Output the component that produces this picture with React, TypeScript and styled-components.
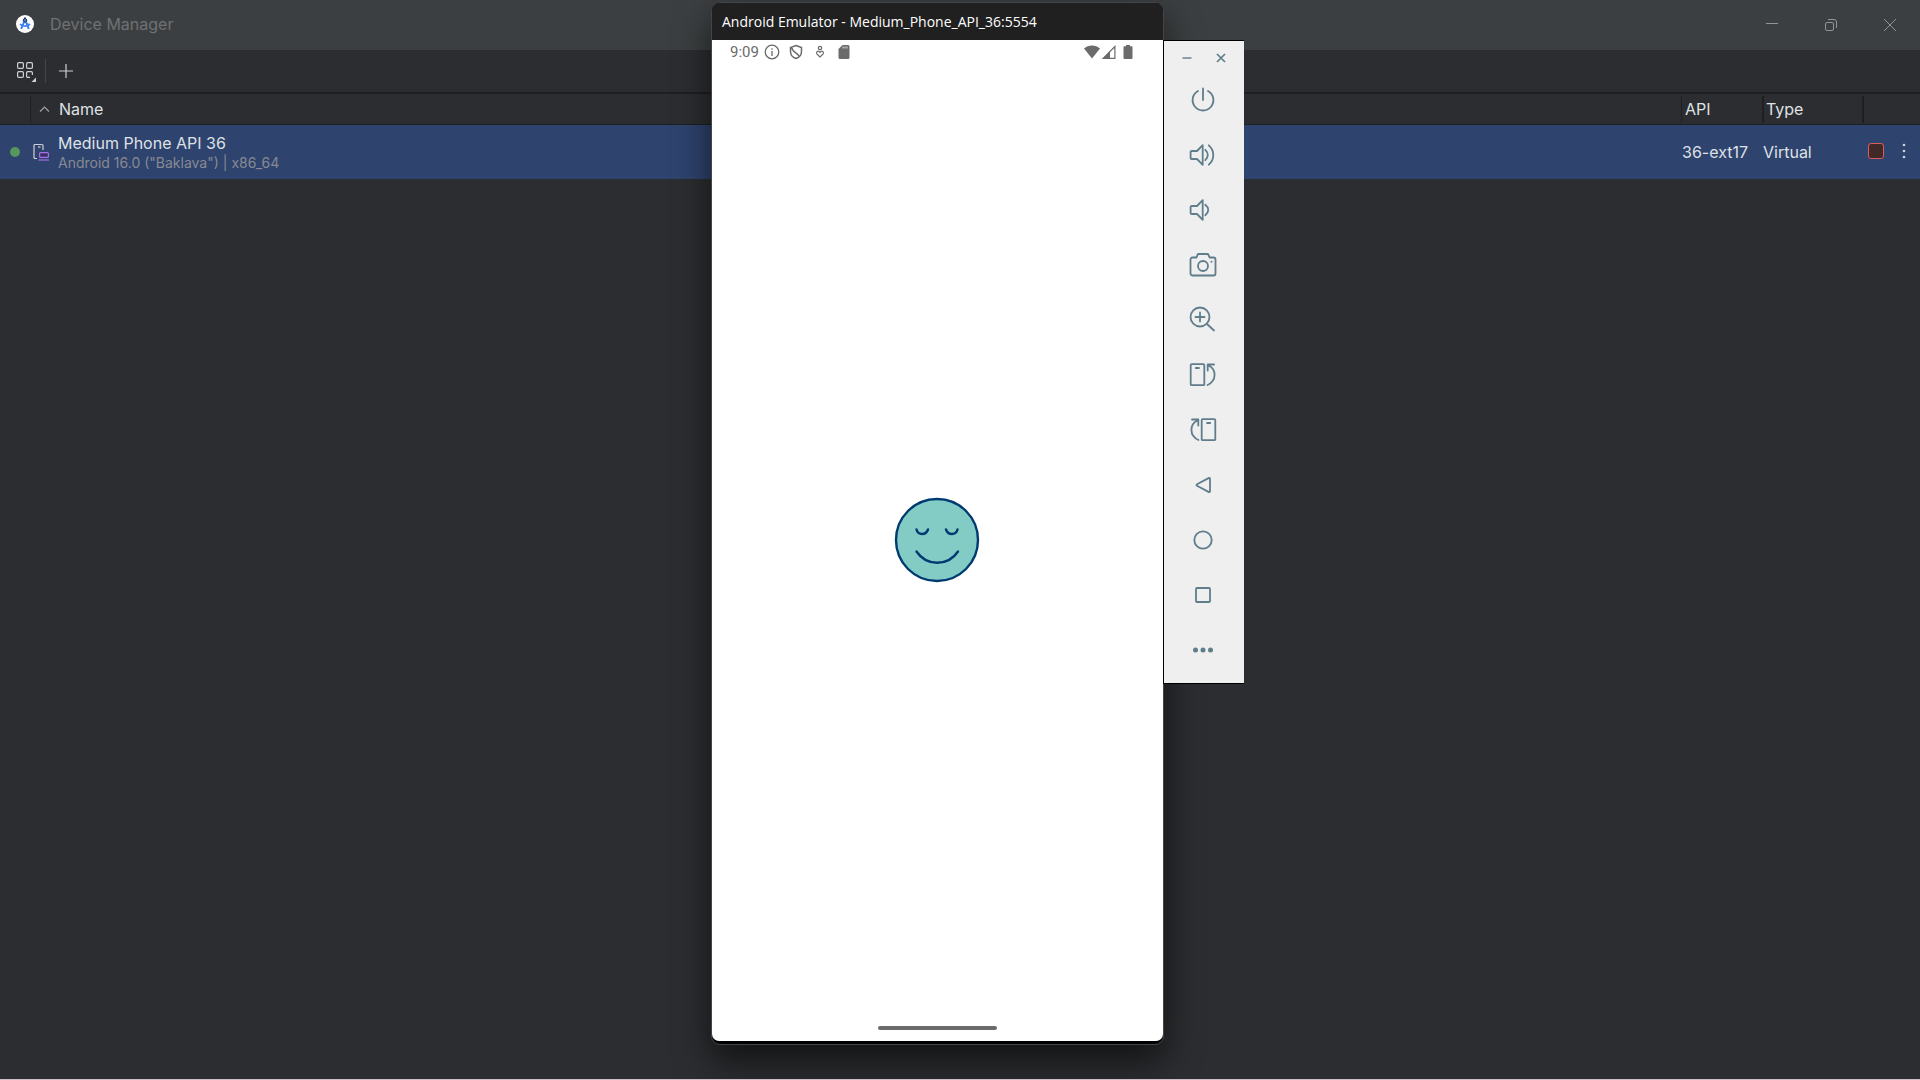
import React from 'react';
import styled, { createGlobalStyle } from 'styled-components';

const GlobalStyle = createGlobalStyle`
  *, *::before, *::after { box-sizing: border-box; }
  body { margin: 0; background: #2b2d30; }
  button { padding: 0; border: 0; background: none; color: inherit; font: inherit; cursor: pointer; }
  svg { display: block; flex: none; }
`;

const Desktop = styled.div`
  position: relative;
  min-height: 100vh;
  overflow: hidden;
  display: flex;
  flex-direction: column;
  background: #2b2d30;
  border-bottom: 1px solid #c9c0c6;
  color: #dfe1e5;
  font-family: Inter, sans-serif;
  font-size: 16px;
  line-height: 20px;
`;

const TitleBar = styled.header`
  display: flex;
  align-items: center;
  justify-content: space-between;
  height: 50px;
  padding: 0 1px 2px 16px;
  background: #3c3f41;
  color: #6f7173;
`;

const TitleGroup = styled.div`
  display: flex;
  align-items: center;
  gap: 16px;
`;

const Title = styled.h1`
  margin: 0;
  font-size: 16px;
  font-weight: 400;
`;

const WindowControls = styled.div`
  display: flex;
`;

const WindowButton = styled.button`
  display: flex;
  align-items: center;
  justify-content: center;
  width: 59px;
  height: 48px;
  padding-top: 2px;
  color: #929496;
`;

const Toolbar = styled.div`
  display: flex;
  align-items: center;
  height: 44px;
  padding-left: 12px;
  gap: 7px;
  border-bottom: 2px solid #1e1f22;
`;

const ToolButton = styled.button`
  display: flex;
  align-items: center;
  justify-content: center;
  width: 26px;
  height: 26px;
  color: #ced0d6;
`;

const ToolDivider = styled.span`
  width: 1px;
  height: 24px;
  background: #43454a;
`;

const DeviceTable = styled.table`
  width: 100%;
  table-layout: fixed;
  border-collapse: separate;
  border-spacing: 0;
`;

const Column = styled.col<{ $width?: number }>`
  width: ${(p) => (p.$width ? `${p.$width}px` : 'auto')};
`;

const HeadCell = styled.th`
  height: 31px;
  padding: 0;
  border-bottom: 1px solid #1e1f22;
  font-weight: 400;
  text-align: left;
`;

const HeadLabel = styled.div<{ $rule?: number }>`
  display: flex;
  align-items: center;
  gap: 9px;
  height: 27px;
  padding-left: ${(p) => (p.$rule === 1 ? 3 : 2)}px;
  border-left: ${(p) => p.$rule ?? 0}px solid #1e1f22;
`;

const SortLabel = styled(HeadLabel)`
  padding-left: 8px;
`;

const DeviceCell = styled.td`
  height: 54px;
  padding: 0 0 0 1px;
  background: #2e436e;
`;

const DeviceInfo = styled.div`
  display: flex;
  align-items: center;
  gap: 8px;
  padding-left: 2px;
`;

const DeviceText = styled.div`
  display: flex;
  flex-direction: column;
  padding-top: 2px;
`;

const DeviceDetail = styled.span`
  color: #878a92;
  font-size: 14px;
`;

const StatusDot = styled.span`
  display: block;
  width: 10px;
  height: 10px;
  margin-left: 9px;
  border-radius: 50%;
  background: #57965c;
`;

const RowActions = styled.div`
  display: flex;
  align-items: center;
  gap: 12px;
  padding: 0 0 2px 5px;
`;

const StopButton = styled.button`
  width: 16px;
  height: 16px;
  border: 1px solid #db5c5c;
  border-radius: 3px;
  background: #402929;
`;

const MenuButton = styled.button`
  display: flex;
  justify-content: center;
  width: 16px;
  height: 20px;
  align-items: center;
`;

const PhoneWindow = styled.section`
  position: absolute;
  top: 2px;
  left: 711px;
  width: 453px;
  height: 1043px;
  display: flex;
  flex-direction: column;
  overflow: hidden;
  padding-bottom: 3px;
  border: 1px solid #434546;
  border-radius: 9px;
  background: #000;
  box-shadow: 0 16px 36px rgba(0, 0, 0, 0.6);
`;

const PhoneTitle = styled.h2`
  flex: none;
  margin: 0;
  height: 37px;
  padding-left: 10px;
  background: #202020;
  color: #fff;
  font-family: 'Open Sans', 'Noto Sans', sans-serif;
  font-size: 14px;
  font-weight: 400;
  line-height: 37px;
  white-space: nowrap;
`;

const Screen = styled.main`
  flex: 1;
  display: flex;
  flex-direction: column;
  align-items: center;
  justify-content: space-between;
  border-radius: 0 0 7px 7px;
  background: #fff;
`;

const StatusBar = styled.div`
  display: flex;
  justify-content: space-between;
  align-items: center;
  width: 100%;
  height: 24px;
  padding: 0 29px 0 18px;
  color: #6b6b6b;
  font-family: Roboto, sans-serif;
`;

const StatusGroup = styled.div<{ $gap: number }>`
  display: flex;
  align-items: center;
  gap: ${(p) => p.$gap}px;
`;

const Clock = styled.time`
  margin-right: -3px;
  font-size: 15px;
`;

const GestureArea = styled.div`
  padding: 10px 0 11px;
`;

const HomeHandle = styled.div`
  width: 119px;
  height: 4px;
  border-radius: 2px;
  background: #6b6b6b;
`;

const ControlPanel = styled.aside`
  position: absolute;
  top: 40px;
  left: 1163px;
  width: 81px;
  display: flex;
  flex-direction: column;
  align-items: center;
  padding: 0 2px 6px 0;
  border: solid #000;
  border-width: 1px 0 1px 1px;
  background: #efefef;
  color: #5f7d8b;
`;

const PanelHeader = styled.div`
  display: flex;
  gap: 14px;
  align-items: center;
  height: 31px;
  padding: 3px 0 0 1px;
`;

const PanelSmallButton = styled.button`
  display: flex;
  align-items: center;
  justify-content: center;
  width: 20px;
  height: 20px;
`;

const PanelButton = styled.button`
  display: flex;
  align-items: center;
  justify-content: center;
  width: 100%;
  height: 55px;
`;

const StudioLogo = () => (
  <svg width="18" height="18" viewBox="0 0 18 18" fill="none">
    <circle cx="9" cy="9" r="9" fill="#fff" />
    <path d="M11 7.5l3 2-2.2 1.6z" fill="#3ddc84" />
    <path d="M8.6 5.5L5.2 14M9.4 5.5L12.8 14" stroke="#3d7fea" strokeWidth="2" />
    <path d="M4 9.2c2.6 2.6 7.400 2.600 10 0" stroke="#4285f4" strokeWidth="1.700" />
    <circle cx="9" cy="5.300" r="1.700" fill="#4285f4" stroke="#1d3557" />
    <path d="M9 2.300v1.700" stroke="#1d3557" strokeWidth="1.400" />
  </svg>
);

const GroupIcon = () => (
  <svg width="18" height="20" viewBox="0 0 18 20" overflow="visible" fill="none" stroke="currentColor" strokeWidth="1.200">
    <rect x="1.600" y="1.600" width="5.800" height="5.800" rx="1.200" />
    <rect x="10.600" y="1.600" width="5.800" height="5.800" rx="1.200" />
    <rect x="1.600" y="10.600" width="5.800" height="5.800" rx="1.200" />
    <path d="M16.400 14v-2.200a1.200 1.200 0 0 0-1.200-1.200h-3.400a1.200 1.200 0 0 0-1.200 1.200v3.400a1.200 1.200 0 0 0 1.200 1.200H14" />
    <path d="M20 16.500v4.500h-4.500z" fill="currentColor" stroke="none" />
  </svg>
);

const PhoneIcon = () => (
  <svg width="17" height="18" viewBox="0 0 17 18" fill="none">
    <path d="M4 15.500H2a1 1 0 0 1-1-1v-12a1 1 0 0 1 1-1h7a1 1 0 0 1 1 1V7" stroke="#ced0d6" strokeWidth="1.200" />
    <path d="M5 4h2.500" stroke="#ced0d6" strokeWidth="1.200" />
    <rect x="6.600" y="9.600" width="8.800" height="4.800" rx="1" fill="#3b2f63" stroke="#a571e6" strokeWidth="1.200" />
    <path d="M5.500 17h10.500" stroke="#a571e6" strokeWidth="1.200" />
  </svg>
);

type ControlName =
  | 'Power' | 'Volume up' | 'Volume down' | 'Take screenshot' | 'Zoom'
  | 'Rotate left' | 'Rotate right' | 'Back' | 'Home' | 'Overview' | 'More';

const speaker = <path d="M8 10L13.700 4.200v19.600L8 18H2.600a1 1 0 0 1-1-1v-6a1 1 0 0 1 1-1z" />;

const controls: [ControlName, React.ReactNode][] = [
  ['Power', <path d="M9 5A10.400 10.400 0 1 0 19 5M14 2.500V14" />],
  ['Volume up', <>{speaker}<path d="M16.300 8.800c3.300 3 3.300 7.400 0 10.400M19.800 4.300c6 5.400 6 14 0 19.400" /></>],
  ['Volume down', <>{speaker}<path d="M16.300 8.800c3.900 3 3.900 7.400 0 10.400" /></>],
  ['Take screenshot', <>
    <path d="M3.500 6.500h3.800L9 3h10l1.700 3.500h3.800a2 2 0 0 1 2 2v14a2 2 0 0 1-2 2h-21a2 2 0 0 1-2-2v-14a2 2 0 0 1 2-2z" />
    <circle cx="14" cy="15" r="5" />
    <circle cx="22.500" cy="10.800" r="1" fill="currentColor" stroke="none" />
  </>],
  ['Zoom', <><circle cx="11" cy="11" r="9.500" /><path d="M18 18l7 6.500M11 6.500v9M6.500 11h9" /></>],
  ['Rotate left', <>
    <rect x="1.700" y="3.200" width="13.600" height="21" rx="1" />
    <path d="M6.800 7h3.200M18.500 24c9.500-4 9-16 1-19.500M25 3.500h-6.300v6" />
  </>],
  ['Rotate right', <>
    <rect x="12.700" y="3.200" width="13.600" height="21" rx="1" />
    <path d="M18 7h3.200M9.500 24C0 20 .5 8 8.500 4.500M3 3.500h6.300v6" />
  </>],
  ['Back', <path d="M21 7.500v13a.7.7 0 0 1-1 .6L8 14.800a.9.9 0 0 1 0-1.600L20 6.900a.7.7 0 0 1 1 .6z" />],
  ['Home', <circle cx="14" cy="14" r="8.700" />],
  ['Overview', <rect x="7" y="7" width="14" height="14" rx="1" />],
  ['More', <g fill="currentColor" stroke="none">
    <circle cx="6.500" cy="14" r="2.500" /><circle cx="14" cy="14" r="2.500" /><circle cx="21.500" cy="14" r="2.500" />
  </g>],
];

export default function App() {
  return (
    <>
      <GlobalStyle />
      <Desktop>
        <TitleBar>
          <TitleGroup>
            <StudioLogo />
            <Title>Device Manager</Title>
          </TitleGroup>
          <WindowControls>
            <WindowButton aria-label="Minimize">
              <svg width="14" height="14" fill="none" stroke="currentColor"><path d="M1 5.500h12" /></svg>
            </WindowButton>
            <WindowButton aria-label="Restore">
              <svg width="14" height="14" fill="none" stroke="currentColor">
                <rect x="1.500" y="4.500" width="8" height="8" rx="1.500" />
                <path d="M4 1.500h6a2.500 2.500 0 0 1 2.500 2.500v6" />
              </svg>
            </WindowButton>
            <WindowButton aria-label="Close">
              <svg width="14" height="14" fill="none" stroke="currentColor"><path d="M1 1l12 12M13 1L1 13" /></svg>
            </WindowButton>
          </WindowControls>
        </TitleBar>

        <Toolbar>
          <ToolButton aria-label="Group devices"><GroupIcon /></ToolButton>
          <ToolDivider />
          <ToolButton aria-label="Add device">
            <svg width="16" height="16" fill="none" stroke="currentColor" strokeWidth="1.200"><path d="M8 1v14M1 8h14" /></svg>
          </ToolButton>
        </Toolbar>

        <DeviceTable>
          <colgroup>
            <Column $width={30} />
            <Column />
            <Column $width={81} />
            <Column $width={100} />
            <Column $width={58} />
          </colgroup>
          <thead>
            <tr>
              <HeadCell aria-label="Status" />
              <HeadCell>
                <SortLabel $rule={1}>
                  <svg width="11" height="8" fill="none" stroke="#9da0a8" strokeWidth="1.200"><path d="M1 6.500l4.500-4.500L10 6.500" /></svg>
                  Name
                </SortLabel>
              </HeadCell>
              <HeadCell><HeadLabel $rule={1}>API</HeadLabel></HeadCell>
              <HeadCell><HeadLabel $rule={2}>Type</HeadLabel></HeadCell>
              <HeadCell aria-label="Actions"><HeadLabel $rule={2} /></HeadCell>
            </tr>
          </thead>
          <tbody>
            <tr>
              <DeviceCell><StatusDot /></DeviceCell>
              <DeviceCell>
                <DeviceInfo>
                  <PhoneIcon />
                  <DeviceText>
                    <span>Medium Phone API 36</span>
                    <DeviceDetail>Android 16.0 ("Baklava") | x86_64</DeviceDetail>
                  </DeviceText>
                </DeviceInfo>
              </DeviceCell>
              <DeviceCell>36-ext17</DeviceCell>
              <DeviceCell>Virtual</DeviceCell>
              <DeviceCell>
                <RowActions>
                  <StopButton aria-label="Stop" />
                  <MenuButton aria-label="More actions">
                    <svg width="4" height="16" fill="#ced0d6">
                      <circle cx="2" cy="2" r="1.300" /><circle cx="2" cy="8" r="1.300" /><circle cx="2" cy="14" r="1.300" />
                    </svg>
                  </MenuButton>
                </RowActions>
              </DeviceCell>
            </tr>
          </tbody>
        </DeviceTable>

        <PhoneWindow>
          <PhoneTitle>Android Emulator - Medium_Phone_API_36:5554</PhoneTitle>
          <Screen>
            <StatusBar>
              <StatusGroup $gap={8}>
                <Clock>9:09</Clock>
                <svg width="16" height="16" fill="none" stroke="currentColor" strokeWidth="1.300">
                  <circle cx="8" cy="8" r="6.800" /><path d="M8 7v5M8 4.200v1.500" />
                </svg>
                <svg width="16" height="16" fill="none" stroke="currentColor" strokeWidth="1.500">
                  <path d="M8 1.500l5.500 2v4c0 3.300-2.300 6-5.500 7-3.200-1-5.500-3.700-5.500-7v-4zM4 4c0 4 5.500 4.500 7 8" />
                </svg>
                <svg width="16" height="16" fill="none" stroke="currentColor" strokeWidth="1.200">
                  <circle cx="8" cy="4" r="1.700" />
                  <path d="M8 13L4.800 9.800a1.700 1.700 0 0 1 2.400-2.300l.8.800.8-.8a1.700 1.700 0 0 1 2.400 2.300z" />
                </svg>
                <svg width="16" height="16">
                  <path d="M6.500 1H12a1.500 1.500 0 0 1 1.500 1.500v11A1.500 1.500 0 0 1 12 15H4a1.500 1.500 0 0 1-1.500-1.500V5z" fill="currentColor" />
                  <path d="M7 2.500v2M9 2.500v2M11 2.500v2" stroke="#fff" strokeWidth=".8" />
                </svg>
              </StatusGroup>
              <StatusGroup $gap={2}>
                <svg width="16" height="14" fill="currentColor"><path d="M0 3.500C4.500-.5 11.500-.5 16 3.500L8 13.500z" /></svg>
                <svg width="14" height="14">
                  <path d="M12.900 1.500v11.900H1.200z" fill="none" stroke="currentColor" strokeWidth="1.200" />
                  <path d="M8 6v8H.5z" fill="currentColor" />
                </svg>
                <svg width="16" height="14" fill="currentColor"><path d="M8 0h4v1.300h1.500a1 1 0 0 1 1 1V13a1 1 0 0 1-1 1h-7a1 1 0 0 1-1-1V2.300a1 1 0 0 1 1-1H8z" /></svg>
              </StatusGroup>
            </StatusBar>
            <svg width="89" height="88" viewBox="0 0 89 88" fill="none" stroke="#003a70" strokeWidth="2.400" strokeLinecap="round">
              <circle cx="44" cy="44" r="41" fill="#82ccc5" />
              <path d="M23.500 33.500c1.500 6 9.500 6 11.500 0M53 33.500c2 6 10 6 11.500 0M23.500 55.500c10 15 31.500 15 41.500 0" />
            </svg>
            <GestureArea><HomeHandle /></GestureArea>
          </Screen>
        </PhoneWindow>

        <ControlPanel aria-label="Emulator controls">
          <PanelHeader>
            <PanelSmallButton aria-label="Minimize emulator">
              <svg width="10" height="10" fill="none" stroke="currentColor" strokeWidth="1.400"><path d="M0.500 5h9" /></svg>
            </PanelSmallButton>
            <PanelSmallButton aria-label="Close emulator">
              <svg width="10" height="10" fill="none" stroke="currentColor" strokeWidth="1.700"><path d="M1 1l8 8M9 1L1 9" /></svg>
            </PanelSmallButton>
          </PanelHeader>
          {controls.map(([name, drawing]) => (
            <PanelButton key={name} aria-label={name} title={name}>
              <svg width="28" height="28" viewBox="0 0 28 28" fill="none" stroke="currentColor" strokeWidth="1.800" strokeLinecap="round" strokeLinejoin="round">
                {drawing}
              </svg>
            </PanelButton>
          ))}
        </ControlPanel>
      </Desktop>
    </>
  );
}
